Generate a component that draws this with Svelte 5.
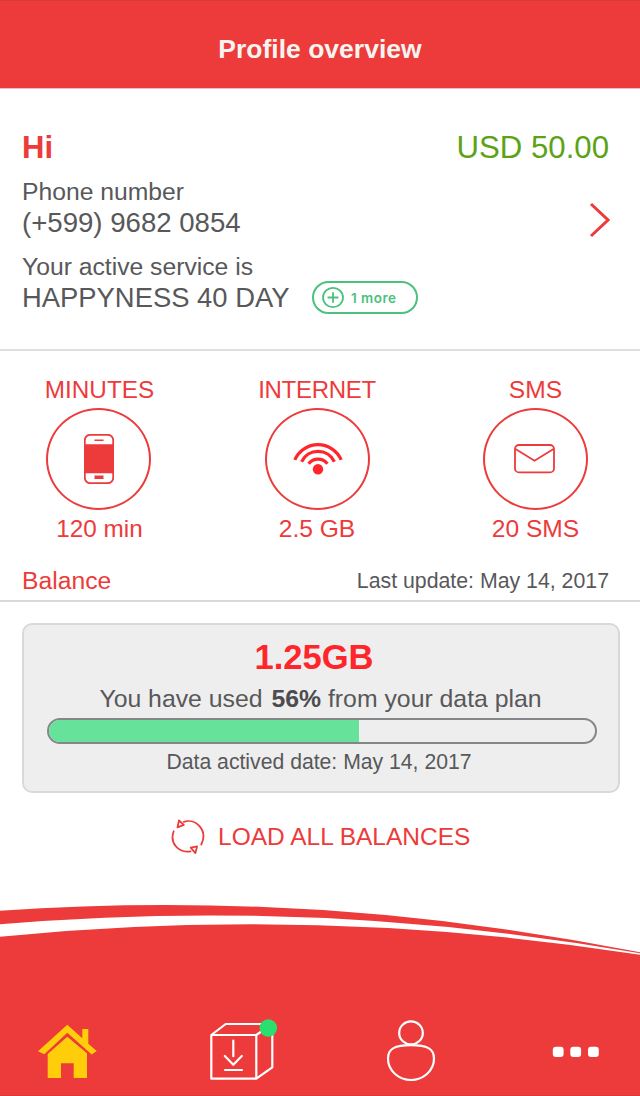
<script lang="ts">
  export let balance = "USD 50.00";
  export let phone = "(+599) 9682 0854";
  export let service = "HAPPYNESS 40 DAY";
  export let updated = "May 14, 2017";
  export let used = 56;

  const quotas = [
    { icon: "phone", label: "MINUTES", value: "120 min" },
    { icon: "wifi", label: "INTERNET", value: "2.5 GB" },
    { icon: "mail", label: "SMS", value: "20 SMS" },
  ];
</script>

<div class="screen">
  <header><h1>Profile overview</h1></header>

  <section class="account">
    <div class="row greeting">
      <h2>Hi</h2>
      <span class="money">{balance}</span>
    </div>
    <div class="row details">
      <div>
        <p class="caption">Phone number</p>
        <p class="info">{phone}</p>
        <p class="caption second">Your active service is</p>
        <div class="service">
          <p class="info name">{service}</p>
          <button class="more">
            <svg width="22" height="21" viewBox="0 0 22 21">
              <ellipse cx="11" cy="10.5" rx="10" ry="9.6" />
              <path d="M11 5.3v10.4M5.6 10.5h10.8" />
            </svg>
            <span>1 more</span>
          </button>
        </div>
      </div>
      <svg class="chevron" width="22" height="38" viewBox="0 0 22 38">
        <path d="M3 3l17 16L3 35" />
      </svg>
    </div>
  </section>

  <section class="quotas">
    {#each quotas as quota}
      <div class="quota {quota.icon}">
        <span class="label">{quota.label}</span>
        <div class="circle">
          {#if quota.icon === "phone"}
            <svg width="30" height="50" viewBox="0 0 30 50">
              <rect class="line" x="0.8" y="0.8" width="28.4" height="48.4" rx="5.5" />
              <path d="M0 10.3h30v29H0zM10.5 5.5h9v1.5h-9zM10.5 41.5h9v3.5h-9z" />
            </svg>
          {:else if quota.icon === "wifi"}
            <svg width="50" height="32" viewBox="0 0 50 32">
              <path class="arc" d="M1.8 16.9A25.3 25.3 0 0 1 48.2 16.9M8.6 18.7A18.2 18.2 0 0 1 41.4 18.7M15.6 20.7A12 12 0 0 1 34.4 20.7" />
              <circle cx="25" cy="26.3" r="5.2" />
            </svg>
          {:else}
            <svg width="41" height="30" viewBox="0 0 41 30">
              <rect class="line" x="1" y="1" width="39" height="27.4" rx="4" />
              <path class="line" d="M1.5 5l19 11.8L39.5 5" />
            </svg>
          {/if}
        </div>
        <span class="label">{quota.value}</span>
      </div>
    {/each}
  </section>

  <div class="row balance">
    <h3>Balance</h3>
    <span>Last update: {updated}</span>
  </div>

  <section class="card">
    <strong class="amount">1.25GB</strong>
    <p class="usage">You have used <b>{used}%</b> from your data plan</p>
    <div class="bar"><div class="fill" style="width: calc({used}% + 4px)"></div></div>
    <p class="date">Data actived date: {updated}</p>
  </section>

  <button class="load">
    <svg width="36" height="38" viewBox="0 0 36 38">
      <path d="M3.7 13.3C-.6 24.5 8 35.3 20.6 33.4M13.8 3.8C26-.2 38.2 12.5 31.3 26.5" />
      <path d="M9 2.5l4.8 4.3-6.3 2.6zM20.7 29.7l6.4-1.3-1.7 6.7z" />
    </svg>
    <span>LOAD ALL BALANCES</span>
  </button>

  <footer>
    <svg class="wave" width="640" height="60" viewBox="0 900 640 60">
      <path d="M0 910.7Q320 888.5 640 952.3V953.3Q320 897 0 924.3z" />
      <path d="M0 936.7Q320 904.9 640 954.7V960H0z" />
    </svg>
    <nav>
      <svg class="home" width="59" height="55" viewBox="0 0 59 55">
        <path d="M0 27.3L29.3.7l15 13.6V5h6v14.7l8.4 7.4-5 3.3L29.3 8.8l-23 21.5z" />
        <path d="M29.3 12.7L49 29.3V54H35.7V39.3H23V54H9.7V30z" />
      </svg>
      <svg class="box" width="68" height="62" viewBox="0 0 68 62">
        <path d="M1.3 16h45v43.7h-45zM1.3 16L15.7 5h46.6v43.3l-16 11.4M46.3 16l16-11" />
        <path d="M23.3 21.7v15.5M14.8 37l8.5 8.7 8.5-8.7M15 51h17" />
        <circle class="dot" cx="58.3" cy="9" r="8.8" />
      </svg>
      <svg width="50" height="62" viewBox="0 0 50 62">
        <ellipse cx="25" cy="12.9" rx="11.8" ry="11.5" />
        <path d="M25 25.2C9 25.2 2 28.5 2 38.5C2 50.5 12.5 60 25 60S48 50.5 48 38.5C48 28.5 41 25.2 25 25.2z" />
      </svg>
      <svg class="dots" width="48" height="12" viewBox="0 0 48 12">
        <rect x="0.8" y="0.8" width="10.8" height="10.2" rx="3" />
        <rect x="18.3" y="0.8" width="10.8" height="10.2" rx="3" />
        <rect x="36" y="0.8" width="10.8" height="10.2" rx="3" />
      </svg>
    </nav>
  </footer>
</div>

<style>
  :global(body) {
    margin: 0;
    background: #fff;
  }

  .screen {
    display: flex;
    flex-direction: column;
    box-sizing: border-box;
    width: 640px;
    height: 1096px;
    overflow: hidden;
    font-family: "Liberation Sans", Arial, sans-serif;
    color: #58585a;
    background: #fff;
  }

  h1,
  h2,
  h3,
  p {
    margin: 0;
  }

  svg {
    display: block;
    flex: none;
  }

  button {
    display: flex;
    align-items: center;
    background: none;
    border: none;
    padding: 0;
    font-family: inherit;
    cursor: pointer;
  }

  header {
    box-sizing: border-box;
    height: 89px;
    padding-top: 32px;
    background: #ec3b3a;
    border-top: 1px solid #d63a3a;
    border-bottom: 1px solid #dcc4c4;
    text-align: center;
  }

  h1 {
    font-size: 26.5px;
    line-height: 32px;
    color: #f7f3f0;
  }

  .row {
    display: flex;
    justify-content: space-between;
  }

  .account {
    box-sizing: border-box;
    height: 262px;
    padding: 41px 31px 0 22px;
    border-bottom: 2px solid #dedede;
  }

  .greeting {
    line-height: 36px;
  }

  h2 {
    font-size: 31px;
    line-height: 36px;
    color: #ec3b3a;
  }

  .money {
    font-size: 31.2px;
    color: #5ba315;
  }

  .details {
    margin-top: 11px;
  }

  .caption {
    font-size: 24.7px;
    line-height: 30px;
  }

  .info {
    font-size: 27.6px;
    line-height: 32px;
  }

  .second {
    margin-top: 13px;
    line-height: 29px;
  }

  .service {
    display: flex;
    align-items: center;
    gap: 22px;
  }

  .name {
    width: 268px;
    font-size: 27.4px;
    white-space: nowrap;
  }

  .more {
    box-sizing: border-box;
    width: 106px;
    height: 33px;
    padding-left: 8px;
    gap: 7px;
    border: 2px solid #4bc17d;
    border-radius: 17px;
    font-family: Inter, "Liberation Sans", sans-serif;
    font-size: 13.5px;
    font-weight: 600;
    letter-spacing: 0.5px;
    color: #4bc17d;
  }

  .more svg {
    fill: none;
    stroke: #4bc17d;
    stroke-width: 1.8;
  }

  .chevron {
    margin-top: 24px;
    margin-right: -1px;
    fill: none;
    stroke: #ec3b3a;
    stroke-width: 3;
  }

  .quotas {
    display: flex;
    justify-content: space-between;
    box-sizing: border-box;
    height: 213px;
    padding: 24px 52px 0 46px;
  }

  .quota {
    display: flex;
    flex-direction: column;
    align-items: center;
    width: 105px;
  }

  .label {
    font-size: 24.6px;
    line-height: 29px;
    white-space: nowrap;
    color: #ec3b3a;
  }

  .phone .label {
    margin-left: 2px;
    font-size: 24.3px;
  }

  .wifi .label:first-child {
    font-size: 24px;
    letter-spacing: -0.3px;
  }

  .circle {
    display: flex;
    align-items: center;
    justify-content: center;
    box-sizing: border-box;
    width: 105px;
    height: 102px;
    margin: 4px 0;
    border: 2px solid #ec3b3a;
    border-radius: 50%;
  }

  .circle svg {
    fill: #ec3b3a;
  }

  .circle .line {
    fill: none;
    stroke: #ec3b3a;
    stroke-width: 1.8;
  }

  .wifi svg {
    margin-left: 2px;
    fill: #ff262b;
  }

  .mail svg {
    margin-right: 2px;
  }

  .arc {
    fill: none;
    stroke: #ff262b;
    stroke-width: 3.2;
  }

  .balance {
    box-sizing: border-box;
    height: 38px;
    padding: 0 31px 0 22px;
    border-bottom: 2px solid #d9d9da;
    font-size: 21.3px;
    line-height: 34px;
  }

  h3 {
    font-size: 24.7px;
    font-weight: 400;
    color: #ec3b3a;
  }

  .card {
    box-sizing: border-box;
    height: 170px;
    margin: 21px 20px 0 22px;
    padding: 13px 21px 0 23px;
    background: #eee;
    border: 2px solid #d9d9da;
    border-radius: 10px;
    text-align: center;
  }

  .amount {
    display: block;
    padding-right: 16px;
    font-size: 34.6px;
    line-height: 38px;
    color: #ff262b;
  }

  .usage {
    margin-top: 8px;
    padding-right: 3px;
    font-size: 24.8px;
    line-height: 30px;
    white-space: nowrap;
  }

  .usage b {
    margin-left: 2px;
    color: #4c4c4e;
  }

  .bar {
    box-sizing: border-box;
    height: 26px;
    margin-top: 4px;
    overflow: hidden;
    border: 2px solid #858687;
    border-radius: 13px;
  }

  .fill {
    height: 100%;
    background: #67e29b;
  }

  .date {
    margin-top: 5px;
    padding-right: 6px;
    font-size: 21.2px;
    line-height: 26px;
  }

  .load {
    align-self: flex-start;
    margin: 24px 0 0 170px;
    gap: 12px;
    font-size: 24.5px;
    line-height: 40px;
    color: #ec3b3a;
  }

  .load svg {
    margin-bottom: 1px;
    fill: none;
    stroke: #ec3b3a;
    stroke-width: 1.8;
    stroke-linejoin: round;
    stroke-linecap: round;
  }

  footer {
    margin-top: auto;
  }

  .wave {
    fill: #ec3b3a;
  }

  nav {
    display: grid;
    grid-template-columns: 172px 176px 166px auto;
    align-items: center;
    box-sizing: border-box;
    height: 136px;
    padding: 46px 0 0 38px;
    background: #ec3b3a;
    border-bottom: 1px solid #d63a3a;
  }

  nav svg {
    fill: none;
    stroke: #fff;
    stroke-width: 2.2;
    stroke-linecap: round;
    stroke-linejoin: round;
  }

  nav .home {
    margin-top: 2px;
    fill: #ffcd0a;
    stroke: none;
  }

  nav .box {
    margin-bottom: 2px;
  }

  nav .dot {
    fill: #2ade70;
    stroke: none;
  }

  nav .dots {
    margin-top: 2px;
    fill: #fff;
    stroke: none;
  }
</style>
